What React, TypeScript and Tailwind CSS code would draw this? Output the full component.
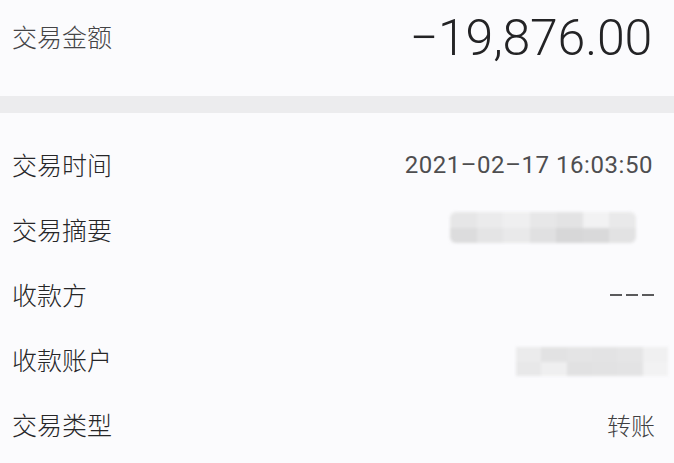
const font = { fontFamily: '"Noto Sans CJK SC", sans-serif' };

const Mosaic = ({ cells, className }: { cells: string[][]; className: string }) => (
  <div className={`flex flex-col overflow-hidden blur-[1.5px] ${className}`}>
    {cells.map((row, i) => (
      <div key={i} className="flex flex-1">
        {row.map((c, j) => (
          <div key={j} className="flex-1" style={{ backgroundColor: c }} />
        ))}
      </div>
    ))}
  </div>
);

const Row = ({ label, children }: { label: string; children: React.ReactNode }) => (
  <div className="flex items-center justify-between h-[65px]">
    <span className="text-[25px] font-light text-[#262628] leading-none">{label}</span>
    {children}
  </div>
);

export default function App() {
  return (
    <div className="w-[674px] h-[463px] bg-[#fbfbfd] overflow-hidden" style={font}>
      {/* amount */}
      <div className="flex items-center justify-between h-[76px] pl-3 pr-[22px] mb-5">
        <span className="text-[25px] font-light text-[#444446] leading-none -mt-[4px]">交易金额</span>
        <span className="text-[50px] font-light text-[#232325] tracking-[-0.2px] leading-none font-['Roboto',sans-serif]">
          −19,876.00
        </span>
      </div>

      <div className="h-[17px] bg-[#ececee]" />

      <div className="pt-[19px] pl-3 pr-[19px]">
        <Row label="交易时间">
          <span className="text-[24px] text-[#4e4e50] leading-none font-['Roboto',sans-serif] tracking-[0.55px] mr-[2px]">
            2021–02–17 16:03:50
          </span>
        </Row>
        <Row label="交易摘要">
          <Mosaic
            className="w-[186px] h-[31px] rounded-[6px] mr-[19px] mb-[4px]"
            cells={[
              ["#e6e6e7", "#ebebec", "#efeff0", "#e7e7e8", "#e3e3e4", "#f2f2f3", "#e9e9ea"],
              ["#dcdcdd", "#e4e4e5", "#e9e9ea", "#e0e0e1", "#d7d7d8", "#d9d9da", "#e2e2e3"],
            ]}
          />
        </Row>
        <Row label="收款方">
          <span className="flex gap-[4px] pr-[1px]">
            <span className="w-[12px] h-[2px] bg-[#5a5a5c]" />
            <span className="w-[12px] h-[2px] bg-[#5a5a5c]" />
            <span className="w-[12px] h-[2px] bg-[#5a5a5c]" />
          </span>
        </Row>
        <Row label="收款账户">
          <Mosaic
            className="w-[152px] h-[29px] -mr-[13px] mt-[4px]"
            cells={[
              ["#ebebec", "#e2e2e3", "#e4e4e5", "#e3e3e4", "#e5e5e6", "#f0f0f1"],
              ["#e8e8e9", "#efeff0", "#e1e1e2", "#e2e2e3", "#e3e3e4", "#f2f2f3"],
            ]}
          />
        </Row>
        <Row label="交易类型">
          <span className="text-[24px] font-light text-[#404042] leading-none">转账</span>
        </Row>
      </div>
    </div>
  );
}
